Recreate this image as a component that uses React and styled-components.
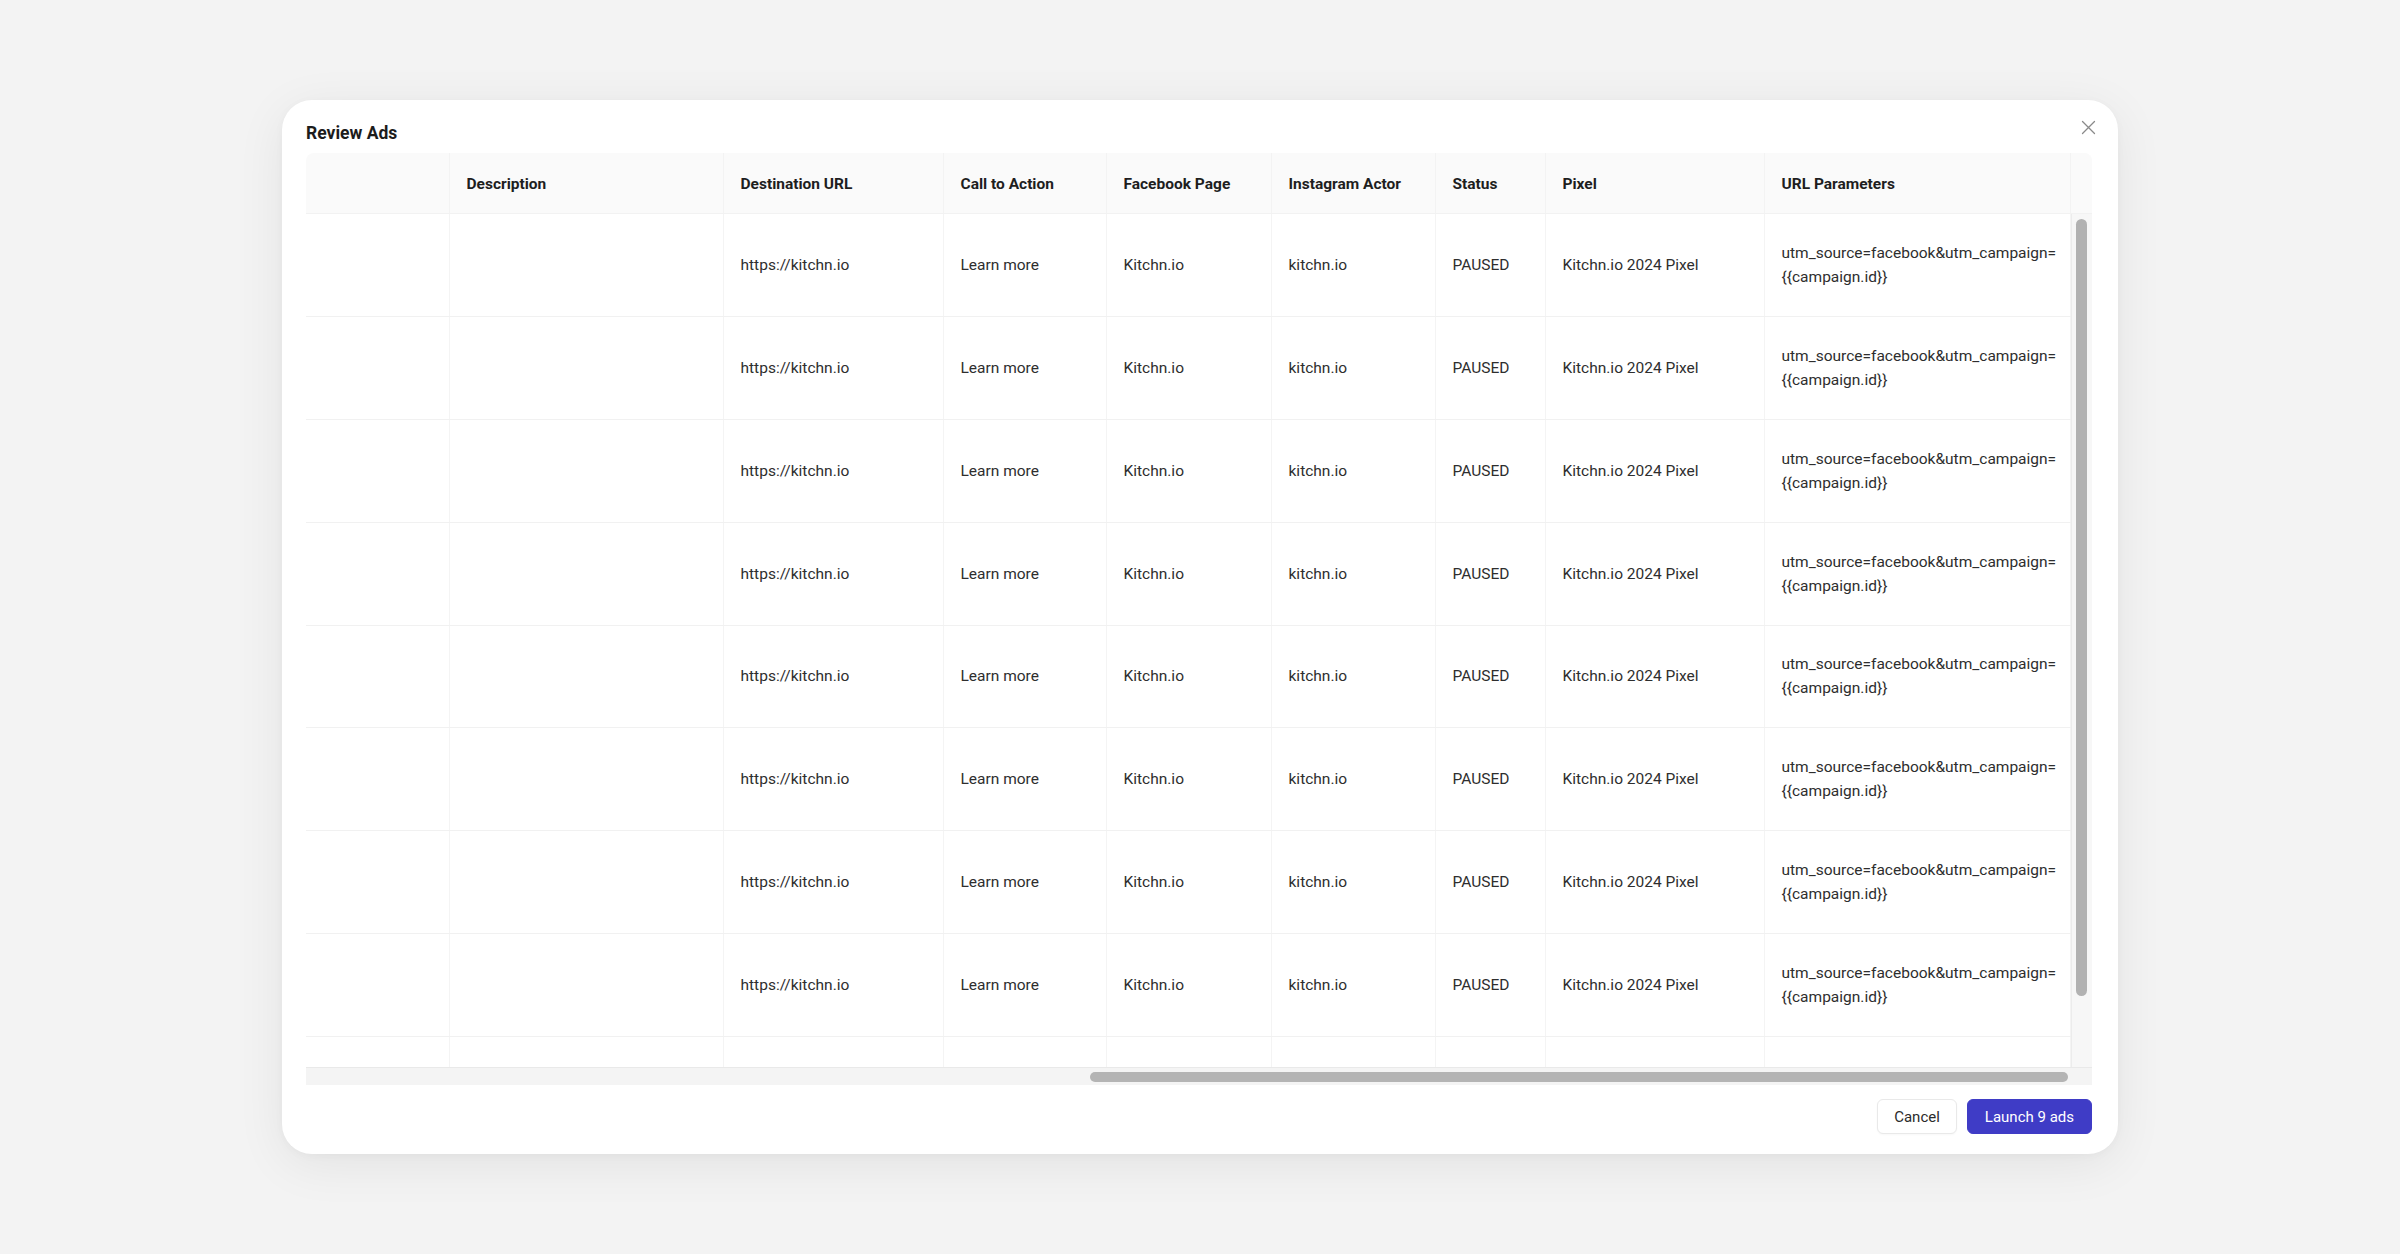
import React, { useLayoutEffect, useRef, useState } from "react";
import styled, { createGlobalStyle } from "styled-components";

const GlobalStyle = createGlobalStyle`
  html, body { margin: 0; padding: 0; }
  body {
    background: #f3f3f3;
    font-family: Roboto, "Liberation Sans", Arial, sans-serif;
    color: #2b2b2b;
    -webkit-font-smoothing: antialiased;
  }
  * { box-sizing: border-box; }
`;

const Page = styled.div`
  height: 100vh;
  display: flex;
  align-items: center;
  justify-content: center;
`;

const Modal = styled.div`
  width: 1836px;
  height: 1054px;
  background: #ffffff;
  border-radius: 30px;
  box-shadow: 0 10px 50px rgba(0, 0, 0, 0.07), 0 2px 10px rgba(0, 0, 0, 0.03);
  padding: 12px 26px 20px 24px;
  display: flex;
  flex-direction: column;
`;

const TitleRow = styled.div`
  height: 41px;
  display: flex;
  align-items: center;
  justify-content: space-between;
`;

const Title = styled.h2`
  margin: 0;
  font-size: 17.5px;
  font-weight: 700;
  color: #1c1c1c;
`;

const CloseButton = styled.button`
  width: 22px;
  height: 22px;
  margin: -10px -7px 0 0;
  padding: 0;
  border: 0;
  background: transparent;
  display: flex;
  align-items: center;
  justify-content: center;
  cursor: pointer;
`;

const TableBox = styled.div`
  display: flex;
  flex-direction: column;
  border-radius: 8px 8px 0 0;
  overflow: hidden;
  background: #fff;
`;

const HeaderBar = styled.div`
  display: flex;
  background: #fafafa;
  border-bottom: 1px solid #f2f2f2;
`;

const HeaderScroll = styled.div`
  flex: 1;
  min-width: 0;
  overflow: hidden;
`;

const Gutter = styled.div`
  width: 21px;
  flex: none;
  background: #fafafa;
`;

const ScrollFrame = styled.div`
  display: grid;
  grid-template-columns: minmax(0, 1fr) 21px;
  grid-template-rows: 853px 18px;
`;

const Viewport = styled.div`
  overflow: hidden;
  min-width: 0;
`;

const VTrack = styled.div`
  background: #f7f7f7;
  border-left: 1px solid #ececec;
  padding: 5px 4px 5px 4px;
  display: flex;
  flex-direction: column;
`;

const VThumb = styled.div`
  width: 11px;
  border-radius: 6px;
  background: #b2b2b2;
`;

const HTrack = styled.div`
  background: #f4f4f4;
  border-top: 1px solid #e9e9e9;
  padding: 4px 3px 3px 3px;
  display: flex;
`;

const HThumb = styled.div`
  height: 10px;
  border-radius: 6px;
  background: #b4b4b4;
`;

const Corner = styled.div`
  background: #f4f4f4;
  border-top: 1px solid #e9e9e9;
`;

const Table = styled.table`
  table-layout: fixed;
  border-collapse: collapse;
  border-spacing: 0;
  width: ${(p) => p.$width}px;
`;

const Th = styled.th`
  height: 60px;
  padding: 2px 17px 0;
  text-align: left;
  font-size: 15.5px;
  font-weight: 700;
  color: #1e1e1e;
  white-space: nowrap;
  overflow: hidden;
  border-right: 1px solid #f3f3f3;
`;

const Td = styled.td`
  height: 102.75px;
  padding: 0 17px;
  font-size: 15.5px;
  line-height: 24px;
  color: #2e2e2e;
  vertical-align: middle;
  border-bottom: 1px solid #f1f1f1;
  border-right: 1px solid #f4f4f4;
  overflow: hidden;
  white-space: ${(p) => (p.$wrap ? "normal" : "nowrap")};
`;

const Footer = styled.div`
  margin-top: 14px;
  display: flex;
  justify-content: flex-end;
  gap: 10px;
`;

const Button = styled.button`
  height: 35px;
  padding: 0 ${(p) => (p.$primary ? "17px" : "16px")};
  border-radius: 6px;
  font-family: Roboto, "Liberation Sans", Arial, sans-serif;
  font-size: 15px;
  cursor: pointer;
  border: 1px solid ${(p) => (p.$primary ? "#3f3cc6" : "#e9e9e9")};
  background: ${(p) => (p.$primary ? "#3f3cc6" : "#ffffff")};
  color: ${(p) => (p.$primary ? "#ffffff" : "#2b2b2b")};
  box-shadow: ${(p) => (p.$primary ? "none" : "0 1px 2px rgba(0,0,0,0.03)")};
`;

const columns = [
  { key: "name", title: "Ad Name", width: 260 },
  { key: "adset", title: "Ad Set", width: 240 },
  { key: "creative", title: "Creative", width: 200 },
  { key: "primary", title: "Primary Text", width: 460 },
  { key: "headline", title: "", width: 394 },
  { key: "description", title: "Description", width: 274 },
  { key: "url", title: "Destination URL", width: 220 },
  { key: "cta", title: "Call to Action", width: 163 },
  { key: "page", title: "Facebook Page", width: 165 },
  { key: "ig", title: "Instagram Actor", width: 164 },
  { key: "status", title: "Status", width: 110 },
  { key: "pixel", title: "Pixel", width: 219 },
  { key: "params", title: "URL Parameters", width: 306, wrap: true },
];

const totalWidth = columns.reduce((s, c) => s + c.width, 0);

const rows = Array.from({ length: 9 }, (_, i) => ({
  name: `Kitchn.io Ad ${i + 1}`,
  adset: "Kitchn.io Ad Set",
  creative: "",
  primary: "",
  headline: "",
  description: "",
  url: "https://kitchn.io",
  cta: "Learn more",
  page: "Kitchn.io",
  ig: "kitchn.io",
  status: "PAUSED",
  pixel: "Kitchn.io 2024 Pixel",
  params: (
    <>
      utm_source=facebook&amp;utm_campaign=
      <wbr />
      {"{{campaign.id}}"}
    </>
  ),
}));

const Cols = () => (
  <colgroup>
    {columns.map((c) => (
      <col key={c.key} style={{ width: c.width }} />
    ))}
  </colgroup>
);

const CloseIcon = () => (
  <svg width="15" height="15" viewBox="0 0 15 15" fill="none">
    <path d="M1.5 1.5L13.5 13.5M13.5 1.5L1.5 13.5" stroke="#8a8a8a" strokeWidth="1.3" strokeLinecap="round" />
  </svg>
);

export default function App() {
  const headRef = useRef(null);
  const bodyRef = useRef(null);
  const vTrackRef = useRef(null);
  const hTrackRef = useRef(null);
  const [bars, setBars] = useState({ vh: 0, vy: 0, hw: 0, hx: 0 });

  useLayoutEffect(() => {
    const b = bodyRef.current;
    const h = headRef.current;
    if (!b) return;
    b.scrollLeft = b.scrollWidth;
    b.scrollTop = 0;
    if (h) h.scrollLeft = b.scrollLeft;
    const vLen = vTrackRef.current ? vTrackRef.current.clientHeight - 10 : 0;
    const hLen = hTrackRef.current ? hTrackRef.current.clientWidth - 6 : 0;
    const vh = (b.clientHeight / b.scrollHeight) * vLen;
    const vy = (b.scrollTop / b.scrollHeight) * vLen;
    const hw = (b.clientWidth / b.scrollWidth) * hLen;
    const hx = (b.scrollLeft / b.scrollWidth) * hLen;
    setBars({ vh, vy, hw, hx });
  }, []);

  return (
    <>
      <GlobalStyle />
      <Page>
        <Modal>
          <TitleRow>
            <Title>Review Ads</Title>
            <CloseButton aria-label="Close">
              <CloseIcon />
            </CloseButton>
          </TitleRow>
          <TableBox>
            <HeaderBar>
              <HeaderScroll ref={headRef}>
                <Table $width={totalWidth}>
                  <Cols />
                  <thead>
                    <tr>
                      {columns.map((c) => (
                        <Th key={c.key}>{c.title}</Th>
                      ))}
                    </tr>
                  </thead>
                </Table>
              </HeaderScroll>
              <Gutter />
            </HeaderBar>
            <ScrollFrame>
              <Viewport ref={bodyRef}>
                <Table $width={totalWidth}>
                  <Cols />
                  <tbody>
                    {rows.map((r, i) => (
                      <tr key={i}>
                        {columns.map((c) => (
                          <Td key={c.key} $wrap={c.wrap}>
                            {r[c.key]}
                          </Td>
                        ))}
                      </tr>
                    ))}
                  </tbody>
                </Table>
              </Viewport>
              <VTrack ref={vTrackRef}>
                <VThumb style={{ height: bars.vh, marginTop: bars.vy }} />
              </VTrack>
              <HTrack ref={hTrackRef}>
                <HThumb style={{ width: bars.hw, marginLeft: bars.hx }} />
              </HTrack>
              <Corner />
            </ScrollFrame>
          </TableBox>
          <Footer>
            <Button>Cancel</Button>
            <Button $primary>Launch 9 ads</Button>
          </Footer>
        </Modal>
      </Page>
    </>
  );
}
